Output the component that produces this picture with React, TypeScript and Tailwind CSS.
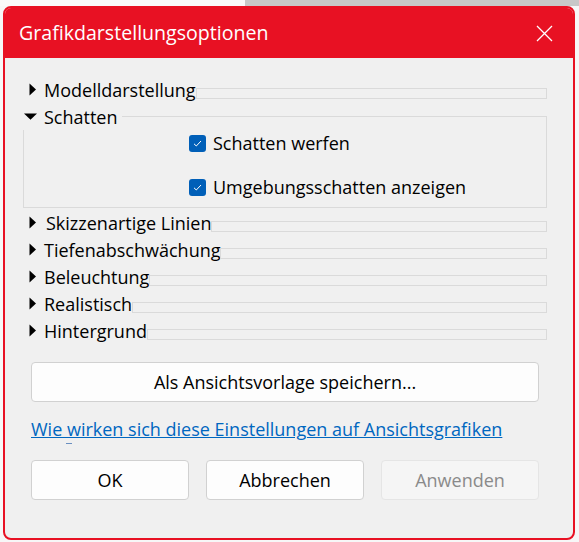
import React from 'react';

const font = { fontFamily: '"Open Sans", "Noto Sans", sans-serif' };

function RightTri() {
    return (
        <svg width="7" height="13" viewBox="0 0 7 13" className="shrink-0">
            <path d="M0.5 0.5 L7 6.5 L0.5 12.5 Z" fill="#000" />
        </svg>
    );
}

function DownTri() {
    return (
        <svg width="13" height="7" viewBox="0 0 13 7" className="shrink-0">
            <path d="M0 0.5 L13 0.5 L6.5 6.8 Z" fill="#000" />
        </svg>
    );
}

function Check() {
    return (
        <span className="w-[17px] h-[17px] rounded-[3px] bg-[#005fb8] flex items-center justify-center shrink-0">
            <svg width="11" height="11" viewBox="0 0 11 11">
                <path d="M2 5.8 L4.3 8 L9 3" fill="none" stroke="#fff" strokeWidth="1" />
            </svg>
        </span>
    );
}

function Section({ label, indent = 'pl-[24px]', gap = 'ml-[8px]' }: { label: string; indent?: string; gap?: string }) {
    return (
        <div className={`flex items-center h-[27px] ${indent}`}>
            <RightTri />
            <span className={`${gap} text-[18px] text-black whitespace-nowrap leading-none`}>{label}</span>
            <div className="flex-1 self-start mt-[12px] h-[11px] border border-[#dadada]" />
        </div>
    );
}

export default function App() {
    return (
        <div className="w-[579px] h-[542px] bg-[#f7f7f7] overflow-hidden" style={font}>
            <div className="h-[6px] flex">
                <div className="w-[245px] bg-[#fafafa]" />
                <div className="flex-1 bg-[#c8c8c8]" />
            </div>
            <div className="ml-[3px] w-[572px] h-[534px] rounded-[8px] border-2 border-[#e81123] bg-[#f0f0f0] overflow-hidden flex flex-col">
                {/* title bar */}
                <div className="h-[50px] bg-[#e81123] flex items-center justify-between pl-[14px] pr-[20px] shrink-0">
                    <span className="text-white text-[19.6px] leading-none">Grafikdarstellungsoptionen</span>
                    <svg width="17" height="17" viewBox="0 0 17 17">
                        <path d="M1 1 L16 16 M16 1 L1 16" stroke="#fff" strokeWidth="1.3" />
                    </svg>
                </div>

                <div className="flex flex-col pt-[18px] pr-[26px]">
                    <Section label="Modelldarstellung" />

                    {/* Schatten group */}
                    <div className="relative z-10 self-start flex items-center h-[27px] ml-[18px] pl-[1px] pr-[4px] bg-[#f0f0f0]">
                        <DownTri />
                        <span className="ml-[7px] text-[18px] text-black leading-none">Schatten</span>
                    </div>
                    <div className="ml-[18px] -mt-[14px] h-[92px] border border-[#dadada] flex flex-col">
                        <div className="flex flex-col pl-[165px] pt-[17px] gap-[26px]">
                            <div className="flex items-center gap-[7px]">
                                <Check />
                                <span className="text-[18px] text-black leading-none">Schatten werfen</span>
                            </div>
                            <div className="flex items-center gap-[7px]">
                                <Check />
                                <span className="text-[18px] text-black leading-none">Umgebungsschatten anzeigen</span>
                            </div>
                        </div>
                    </div>

                    <div className="h-[1px]" />
                    <Section label="Skizzenartige Linien" gap="ml-[10px]" />
                    <Section label="Tiefenabschwächung" />
                    <Section label="Beleuchtung" />
                    <Section label="Realistisch" />
                    <Section label="Hintergrund" />
                </div>

                <div className="px-[26px] pt-[18px] flex flex-col">
                    <button className="h-[40px] w-[508px] rounded-[4px] border border-[#d1d1d1] bg-[#fdfdfd] text-[18px] text-black">
                        Als Ansichtsvorlage speichern...
                    </button>
                    <div className="mt-[15px] h-[24px] overflow-hidden">
                        <a className="text-[18px] text-[#0067c0] underline leading-[24px] whitespace-nowrap">
                            Wie wirken sich diese Einstellungen auf Ansichtsgrafiken
                        </a>
                    </div>
                    <div className="h-[4px] pl-[35px]">
                        <div className="w-[6px] h-[1px] bg-[#6a8fc0] mt-[2px]" />
                    </div>
                    <div className="mt-[15px] flex gap-[17px]">
                        <button className="w-[158px] h-[40px] rounded-[4px] border border-[#d1d1d1] bg-[#fdfdfd] text-[18px] text-black">
                            OK
                        </button>
                        <button className="w-[158px] h-[40px] rounded-[4px] border border-[#d1d1d1] bg-[#fdfdfd] text-[18px] text-black">
                            Abbrechen
                        </button>
                        <button className="w-[158px] h-[40px] rounded-[4px] border border-[#e5e5e5] bg-[#f5f5f5] text-[18px] text-[#8a8a8a]">
                            Anwenden
                        </button>
                    </div>
                </div>
            </div>
        </div>
    );
}
